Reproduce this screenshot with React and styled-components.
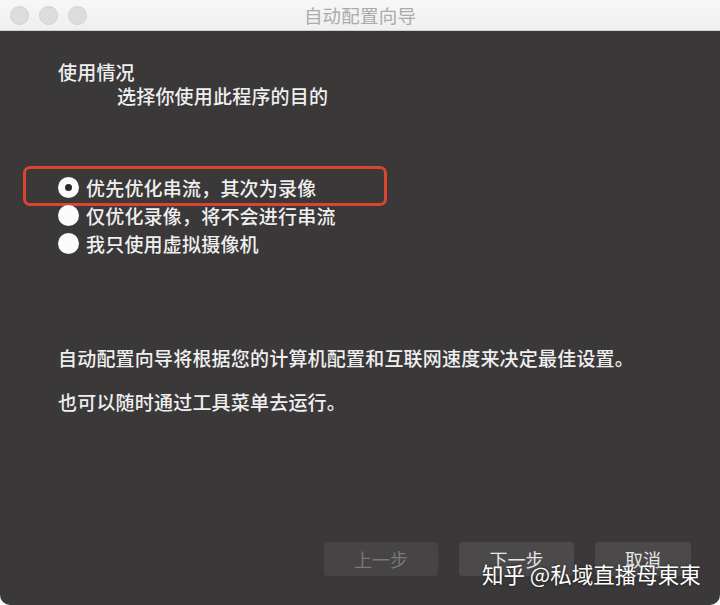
import React, { useState } from "react";
import styled, { createGlobalStyle } from "styled-components";

const GlobalStyle = createGlobalStyle`
  html, body {
    margin: 0;
    padding: 0;
    background: #ffffff;
  }
  body {
    font-family: "Noto Sans CJK SC", "Noto Sans", sans-serif;
  }
`;

// window frame
const Window = styled.div`
  position: relative;
  width: 720px;
  height: 605px;
  display: flex;
  flex-direction: column;
  background: #3b3839;
  border-radius: 0 0 10px 10px;
  overflow: hidden;
`;

const TitleBar = styled.div`
  height: 31px;
  flex-shrink: 0;
  display: flex;
  align-items: center;
  position: relative;
  background: linear-gradient(#f7f7f7, #efefef);
  border-bottom: 1px solid #cfcfcf;
  box-sizing: border-box;
`;

const Lights = styled.div`
  display: flex;
  gap: 10px;
  padding-left: 10px;
`;

const Light = styled.span`
  width: 19px;
  height: 19px;
  border-radius: 50%;
  background: #dddddd;
  border: 1px solid #d2d2d2;
  box-sizing: border-box;
`;

const Title = styled.div`
  flex: 1;
  text-align: center;
  margin-right: 87px;
  font-size: 18.5px;
  color: #ababab;
  letter-spacing: 0.2px;
`;

const Body = styled.div`
  flex: 1;
  display: flex;
  flex-direction: column;
  padding: 0 29px 29px 58px;
  color: #efefef;
  font-size: 19px;
  letter-spacing: 0.2px;
  font-weight: 500;
`;

const Heading = styled.div`
  margin-top: 29px;
  line-height: 24px;
`;

const SubHeading = styled.div`
  line-height: 24px;
  padding-left: 59px;
`;

const Options = styled.div`
  margin-top: 65px;
  display: flex;
  flex-direction: column;
`;

const Option = styled.label`
  position: relative;
  height: 28px;
  display: flex;
  align-items: center;
  gap: 7px;
  cursor: pointer;

  ${(p) =>
    p.$marked &&
    `
    &::after {
      content: "";
      position: absolute;
      left: -35px;
      top: -7px;
      width: 364px;
      height: 40px;
      border: 3px solid #d9452f;
      border-radius: 7px;
      box-sizing: border-box;
      pointer-events: none;
    }
  `}
`;

const Radio = styled.span`
  width: 21px;
  height: 21px;
  border-radius: 50%;
  background: #fbfbfb;
  display: flex;
  align-items: center;
  justify-content: center;
  flex-shrink: 0;

  &::before {
    content: "";
    width: 7px;
    height: 7px;
    border-radius: 50%;
    background: ${(p) => (p.$on ? "#2a2a2a" : "transparent")};
  }
`;

const Para = styled.p`
  margin: ${(p) => p.$top}px 0 0;
  line-height: 24px;
`;

const Footer = styled.div`
  margin-top: auto;
  display: flex;
  justify-content: flex-end;
  gap: 21px;
`;

const Button = styled.button`
  width: ${(p) => p.$w}px;
  height: 34px;
  border: none;
  border-radius: 4px;
  background: ${(p) => (p.disabled ? "#474445" : "#4c494a")};
  color: ${(p) => (p.disabled ? "#7a7778" : "#e6e6e6")};
  font-family: inherit;
  font-size: 18px;
  padding: 0;
`;

const Watermark = styled.div`
  position: absolute;
  left: 482px;
  top: 559px;
  color: #ffffff;
  font-size: 21.5px;
  line-height: 30px;
  white-space: nowrap;
  text-shadow: 0 0 3px rgba(0, 0, 0, 0.6);
`;

const options = [
  "优先优化串流，其次为录像",
  "仅优化录像，将不会进行串流",
  "我只使用虚拟摄像机",
];

export default function App() {
  const [picked, setPicked] = useState(0);

  return (
    <>
      <GlobalStyle />
      <Window>
        <TitleBar>
          <Lights>
            <Light />
            <Light />
            <Light />
          </Lights>
          <Title>自动配置向导</Title>
        </TitleBar>
        <Body>
          <Heading>使用情况</Heading>
          <SubHeading>选择你使用此程序的目的</SubHeading>
          <Options>
            {options.map((text, i) => (
              <Option key={i} $marked={i === 0} onClick={() => setPicked(i)}>
                <Radio $on={picked === i} />
                {text}
              </Option>
            ))}
          </Options>
          <Para $top={89}>自动配置向导将根据您的计算机配置和互联网速度来决定最佳设置。</Para>
          <Para $top={20}>也可以随时通过工具菜单去运行。</Para>
          <Footer>
            <Button $w={114} disabled>上一步</Button>
            <Button $w={115}>下一步</Button>
            <Button $w={96}>取消</Button>
          </Footer>
        </Body>
        <Watermark>知乎 @私域直播母東東</Watermark>
      </Window>
    </>
  );
}
